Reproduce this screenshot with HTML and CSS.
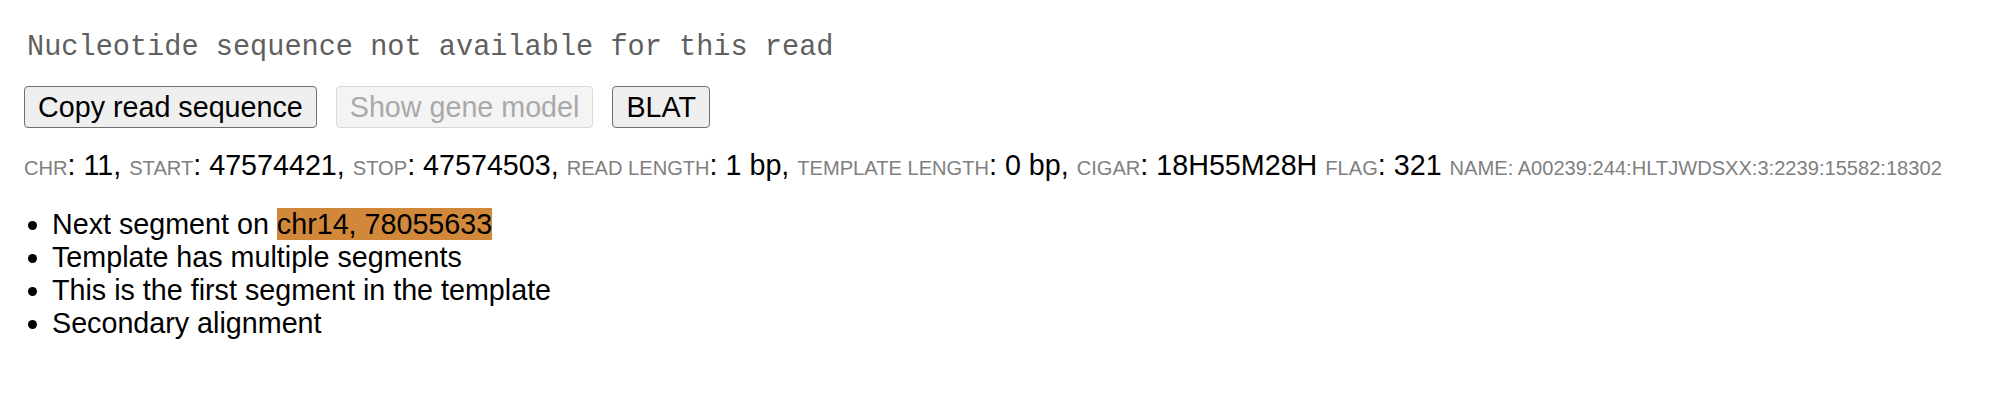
FILE: index.html
```html
<!DOCTYPE html>
<html>
<head>
<meta charset="utf-8">
<link rel="stylesheet" href="styles.css">
</head>
<body>
<div class="popup">
  <div class="seq">Nucleotide sequence not available for this read</div>
  <div class="buttons">
    <button class="btn">Copy read sequence</button>
    <button class="btn" disabled>Show gene model</button>
    <button class="btn">BLAT</button>
  </div>
  <div class="info">
    <span class="lbl">CHR</span>: 11, <span class="lbl">START</span>: 47574421, <span class="lbl">STOP</span>: 47574503, <span class="lbl">READ LENGTH</span>: 1 bp, <span class="lbl">TEMPLATE LENGTH</span>: 0 bp, <span class="lbl">CIGAR</span>: 18H55M28H <span class="lbl">FLAG</span>: 321 <span class="lbl">NAME: A00239:244:HLTJWDSXX:3:2239:15582:18302</span>
  </div>
  <ul class="flags">
    <li>Next segment on <span class="mate">chr14, 78055633</span></li>
    <li>Template has multiple segments</li>
    <li>This is the first segment in the template</li>
    <li>Secondary alignment</li>
  </ul>
</div>
</body>
</html>
```

FILE: styles.css
```css
html, body {
  margin: 0;
  padding: 0;
  background: #ffffff;
}

.popup {
  padding: 32px 0 0 24px;
  font-family: "Liberation Sans", Arial, sans-serif;
  font-size: 28.7px;
  color: #000;
}

.seq {
  font-family: "Liberation Mono", "Courier New", monospace;
  font-size: 28.6px;
  color: #5f5f5f;
  margin-left: 3px;
  line-height: 32px;
}

.buttons {
  display: flex;
  gap: 19px;
  margin-top: 22px;
}

.btn {
  font-family: "Liberation Sans", Arial, sans-serif;
  font-size: 28.7px;
  line-height: 32px;
  height: 42px;
  padding: 0 13px;
  border: 1.5px solid #6f6f6f;
  border-radius: 4px;
  background: #efefef;
  color: #000;
}

.btn:disabled {
  border-color: #d9d9d9;
  background: #f4f4f4;
  color: #a9a9a9;
}

.info {
  margin-top: 21px;
  line-height: 32px;
  white-space: nowrap;
}

.lbl {
  font-size: 20.1px;
  color: #808080;
}

.flags {
  margin: 24px 0 0 0;
  padding-left: 28px;
  line-height: 33px;
}

.mate {
  background: #d2883b;
}
```
